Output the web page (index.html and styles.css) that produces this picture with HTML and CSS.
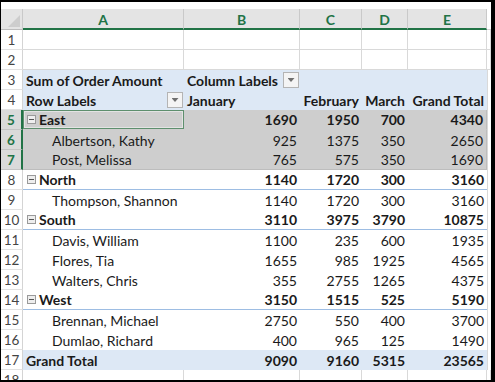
FILE: index.html
```html
<!DOCTYPE html>
<html lang="en">
  <head>
    <link rel="stylesheet" href="styles.css">
  </head>
  <body>
    <div class="sheet">
      <div class="row head">
        <div class="corner"><span class="tri"></span></div>
        <div class="col">A</div>
        <div class="col">B</div>
        <div class="col">C</div>
        <div class="col">D</div>
        <div class="col">E</div>
        <div class="col fill"></div>
      </div>

      <div class="row blank">
        <div class="num">1</div><div></div><div></div><div></div><div></div><div></div><div class="fill"></div>
      </div>
      <div class="row blank">
        <div class="num">2</div><div></div><div></div><div></div><div></div><div></div><div class="fill"></div>
      </div>

      <div class="row pv top">
        <div class="num">3</div>
        <div class="c b">Sum of Order Amount</div>
        <div class="c b split">Column Labels <span class="dd"></span></div>
        <div class="c"></div><div class="c"></div><div class="c"></div>
        <div class="fill"></div>
      </div>
      <div class="row pv top">
        <div class="num">4</div>
        <div class="c b split">Row Labels <span class="dd"></span></div>
        <div class="c b">January</div>
        <div class="c b n">February</div>
        <div class="c b n">March</div>
        <div class="c b n">Grand Total</div>
        <div class="fill"></div>
      </div>

      <div class="row pv sel region">
        <div class="num">5</div>
        <div class="c b active"><span class="minus"></span>East</div>
        <div class="c b n">1690</div><div class="c b n">1950</div><div class="c b n">700</div><div class="c b n">4340</div>
        <div class="fill"></div>
      </div>
      <div class="row pv sel">
        <div class="num">6</div>
        <div class="c name">Albertson, Kathy</div>
        <div class="c n">925</div><div class="c n">1375</div><div class="c n">350</div><div class="c n">2650</div>
        <div class="fill"></div>
      </div>
      <div class="row pv sel">
        <div class="num">7</div>
        <div class="c name">Post, Melissa</div>
        <div class="c n">765</div><div class="c n">575</div><div class="c n">350</div><div class="c n">1690</div>
        <div class="fill"></div>
      </div>

      <div class="row pv region">
        <div class="num">8</div>
        <div class="c b"><span class="minus"></span>North</div>
        <div class="c b n">1140</div><div class="c b n">1720</div><div class="c b n">300</div><div class="c b n">3160</div>
        <div class="fill"></div>
      </div>
      <div class="row pv">
        <div class="num">9</div>
        <div class="c name">Thompson, Shannon</div>
        <div class="c n">1140</div><div class="c n">1720</div><div class="c n">300</div><div class="c n">3160</div>
        <div class="fill"></div>
      </div>

      <div class="row pv region">
        <div class="num">10</div>
        <div class="c b"><span class="minus"></span>South</div>
        <div class="c b n">3110</div><div class="c b n">3975</div><div class="c b n">3790</div><div class="c b n">10875</div>
        <div class="fill"></div>
      </div>
      <div class="row pv">
        <div class="num">11</div>
        <div class="c name">Davis, William</div>
        <div class="c n">1100</div><div class="c n">235</div><div class="c n">600</div><div class="c n">1935</div>
        <div class="fill"></div>
      </div>
      <div class="row pv">
        <div class="num">12</div>
        <div class="c name">Flores, Tia</div>
        <div class="c n">1655</div><div class="c n">985</div><div class="c n">1925</div><div class="c n">4565</div>
        <div class="fill"></div>
      </div>
      <div class="row pv">
        <div class="num">13</div>
        <div class="c name">Walters, Chris</div>
        <div class="c n">355</div><div class="c n">2755</div><div class="c n">1265</div><div class="c n">4375</div>
        <div class="fill"></div>
      </div>

      <div class="row pv region">
        <div class="num">14</div>
        <div class="c b"><span class="minus"></span>West</div>
        <div class="c b n">3150</div><div class="c b n">1515</div><div class="c b n">525</div><div class="c b n">5190</div>
        <div class="fill"></div>
      </div>
      <div class="row pv">
        <div class="num">15</div>
        <div class="c name">Brennan, Michael</div>
        <div class="c n">2750</div><div class="c n">550</div><div class="c n">400</div><div class="c n">3700</div>
        <div class="fill"></div>
      </div>
      <div class="row pv">
        <div class="num">16</div>
        <div class="c name">Dumlao, Richard</div>
        <div class="c n">400</div><div class="c n">965</div><div class="c n">125</div><div class="c n">1490</div>
        <div class="fill"></div>
      </div>

      <div class="row pv total">
        <div class="num">17</div>
        <div class="c b">Grand Total</div>
        <div class="c b n">9090</div><div class="c b n">9160</div><div class="c b n">5315</div><div class="c b n">23565</div>
        <div class="fill"></div>
      </div>

      <div class="row blank">
        <div class="num">18</div><div></div><div></div><div></div><div></div><div></div><div class="fill"></div>
      </div>
    </div>
  </body>
</html>
```

FILE: styles.css
```css
* {
  box-sizing: border-box;
}

body {
  margin: 0;
  font-family: Lato, "Liberation Sans", sans-serif;
  font-size: 14px;
  color: #1a1a1a;
}

.sheet {
  --green: #217346;
  --grid: #d9d9d9;
  --blue: #dde8f5;
  --line: #9dbde3;
  width: 495px;
  height: 382px;
  overflow: hidden;
  background: #fff;
  border-style: solid;
  border-color: #000;
  border-width: 2px 4px 2px 1px;
  padding-top: 7px;
}

.row {
  display: grid;
  grid-template-columns: 22px 161px 116px 62px 46px 79px 1fr;
  height: 20px;
}

.row > div {
  display: flex;
  align-items: center;
  white-space: nowrap;
  overflow: hidden;
}

/* column headers */
.head {
  height: 21px;
}
.head .col {
  justify-content: center;
  background: #e4e4e4;
  color: var(--green);
  font-weight: 700;
  border-right: 1px solid #c9c9c9;
  border-bottom: 2px solid var(--green);
  padding-top: 1px;
}
.head .fill {
  background: #fff;
  border-bottom: 1px solid #d4d4d4;
  border-right: none;
}
.corner {
  background: #e4e4e4;
  border-right: 1px solid #c9c9c9;
  border-bottom: 1px solid #bcbcbc;
  justify-content: flex-end;
  align-items: flex-end !important;
  padding: 0 2px 2px 0;
}
.tri {
  width: 12px;
  height: 12px;
  background: #cdcdcd;
  clip-path: polygon(100% 0, 100% 100%, 0 100%);
}

/* row numbers */
.num {
  justify-content: center;
  color: #444;
  font-size: 13.5px;
  border-right: 1px solid #d4d4d4;
  border-bottom: 1px solid #e2e2e2;
}

.blank > div:not(.num) {
  border-right: 1px solid var(--grid);
  border-bottom: 1px solid var(--grid);
}
.blank > .fill {
  border-right: none;
}
.pv > .fill {
  border-left: 1px solid var(--grid);
}

/* pivot cells */
.c {
  padding: 0 3px;
}
.b {
  font-weight: 700;
}
.n {
  justify-content: flex-end;
}
.name {
  padding-left: 29px;
}
.split {
  justify-content: space-between;
  padding-right: 1px;
}

.top .c,
.total .c {
  background: var(--blue);
}
.region .c {
  border-bottom: 1px solid var(--line);
}

.dd {
  width: 16px;
  height: 16px;
  background: #f4f4f4;
  border: 1px solid #b4b4b4;
  display: flex;
  align-items: center;
  justify-content: center;
}
.dd::after {
  content: "";
  width: 7px;
  height: 4px;
  background: #6f6f6f;
  clip-path: polygon(0 0, 100% 0, 50% 100%);
}

.minus {
  width: 9px;
  height: 9px;
  margin: 0 3px 0 1px;
  border: 1px solid #9a9a9a;
  background: #eee;
  display: flex;
  align-items: center;
  justify-content: center;
}
.minus::after {
  content: "";
  width: 5px;
  height: 1px;
  background: #555;
}

/* selection A5:E7 */
.sel .c {
  background: #cecece;
  border-bottom-color: #cecece;
}
.sel > .num {
  background: #dadada;
  color: var(--green);
  font-weight: 700;
  border-right: 2px solid var(--green);
  border-bottom-color: #c4c4c4;
}
.sel > .c:nth-child(6) {
  border-right: 1px solid #bdbdbd;
}
.sel:nth-child(8) .c {
  border-bottom: 1px solid #bdbdbd;
}
.active {
  box-shadow: inset 0 0 0 1px #5e8f6e, inset 0 0 0 2px #e3e3e3;
  padding-left: 3px;
}
```
